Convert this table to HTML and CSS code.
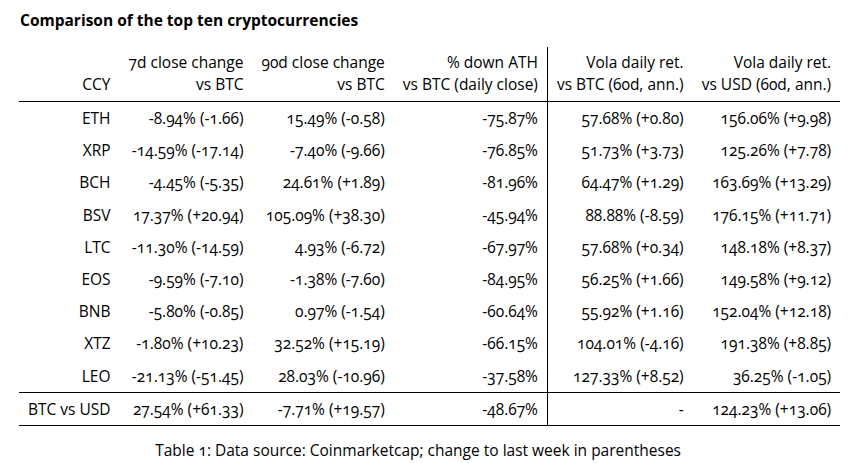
FILE: index.html
```html
<!DOCTYPE html>
<html lang="en">
<head>
<meta charset="utf-8">
<title>Comparison of the top ten cryptocurrencies</title>
<link rel="stylesheet" href="styles.css">
</head>
<body>
<div class="page">
  <h1 class="title">Comparison of the top ten cryptocurrencies</h1>
  <table class="data">
    <caption class="caption">Table 1: Data source: Coinmarketcap; change to last week in parentheses</caption>
    <thead>
      <tr>
        <th class="c1">CCY</th>
        <th class="c2">7d close change<br>vs BTC</th>
        <th class="c3">90d close change<br>vs BTC</th>
        <th class="c4 sep">% down ATH<br>vs BTC (daily close)</th>
        <th class="c5">Vola daily ret.<br>vs BTC (60d, ann.)</th>
        <th class="c6">Vola daily ret.<br>vs USD (60d, ann.)</th>
      </tr>
    </thead>
    <tbody>
      <tr><td>ETH</td><td>-8.94% (-1.66)</td><td>15.49% (-0.58)</td><td class="sep">-75.87%</td><td>57.68% (+0.80)</td><td>156.06% (+9.98)</td></tr>
      <tr><td>XRP</td><td>-14.59% (-17.14)</td><td>-7.40% (-9.66)</td><td class="sep">-76.85%</td><td>51.73% (+3.73)</td><td>125.26% (+7.78)</td></tr>
      <tr><td>BCH</td><td>-4.45% (-5.35)</td><td>24.61% (+1.89)</td><td class="sep">-81.96%</td><td>64.47% (+1.29)</td><td>163.69% (+13.29)</td></tr>
      <tr><td>BSV</td><td>17.37% (+20.94)</td><td>105.09% (+38.30)</td><td class="sep">-45.94%</td><td>88.88% (-8.59)</td><td>176.15% (+11.71)</td></tr>
      <tr><td>LTC</td><td>-11.30% (-14.59)</td><td>4.93% (-6.72)</td><td class="sep">-67.97%</td><td>57.68% (+0.34)</td><td>148.18% (+8.37)</td></tr>
      <tr><td>EOS</td><td>-9.59% (-7.10)</td><td>-1.38% (-7.60)</td><td class="sep">-84.95%</td><td>56.25% (+1.66)</td><td>149.58% (+9.12)</td></tr>
      <tr><td>BNB</td><td>-5.80% (-0.85)</td><td>0.97% (-1.54)</td><td class="sep">-60.64%</td><td>55.92% (+1.16)</td><td>152.04% (+12.18)</td></tr>
      <tr><td>XTZ</td><td>-1.80% (+10.23)</td><td>32.52% (+15.19)</td><td class="sep">-66.15%</td><td>104.01% (-4.16)</td><td>191.38% (+8.85)</td></tr>
      <tr class="rule"><td>LEO</td><td>-21.13% (-51.45)</td><td>28.03% (-10.96)</td><td class="sep">-37.58%</td><td>127.33% (+8.52)</td><td>36.25% (-1.05)</td></tr>
      <tr class="rule"><td>BTC vs USD</td><td>27.54% (+61.33)</td><td>-7.71% (+19.57)</td><td class="sep">-48.67%</td><td>-</td><td>124.23% (+13.06)</td></tr>
    </tbody>
  </table>
</div>
</body>
</html>
```
FILE: styles.css
```css
html, body {
  margin: 0;
  padding: 0;
  background: #ffffff;
}

.page {
  padding: 9px 0 0 19px;
  font-family: "Open Sans", "Noto Sans", "DejaVu Sans", sans-serif;
  font-variant-numeric: oldstyle-nums;
  color: #000000;
  font-size: 15.5px;
}

.title {
  margin: 0 0 0 1px;
  font-size: 15.5px;
  font-weight: 700;
  line-height: 22px;
}

.data {
  margin-top: 16px;
  border-collapse: collapse;
  width: 820px;
}

.data th,
.data td {
  text-align: right;
  white-space: nowrap;
  font-weight: 400;
  line-height: 22px;
  padding: 5.1px 9px;
}

.data th {
  padding-top: 4px;
  padding-bottom: 6px;
  vertical-align: bottom;
  border-bottom: 1px solid #000000;
}

.data .sep {
  border-right: 1px solid #000000;
}

.data .rule td {
  border-bottom: 1px solid #000000;
}

.c1 { width: 82px; }
.c2 { width: 115px; }
.c3 { width: 124px; }
.c4 { width: 134px; }
.c5 { width: 126px; }
.c6 { width: 130px; }

.caption {
  caption-side: bottom;
  padding: 13px 23px 0 0;
  line-height: 22px;
  text-align: center;
}
```
